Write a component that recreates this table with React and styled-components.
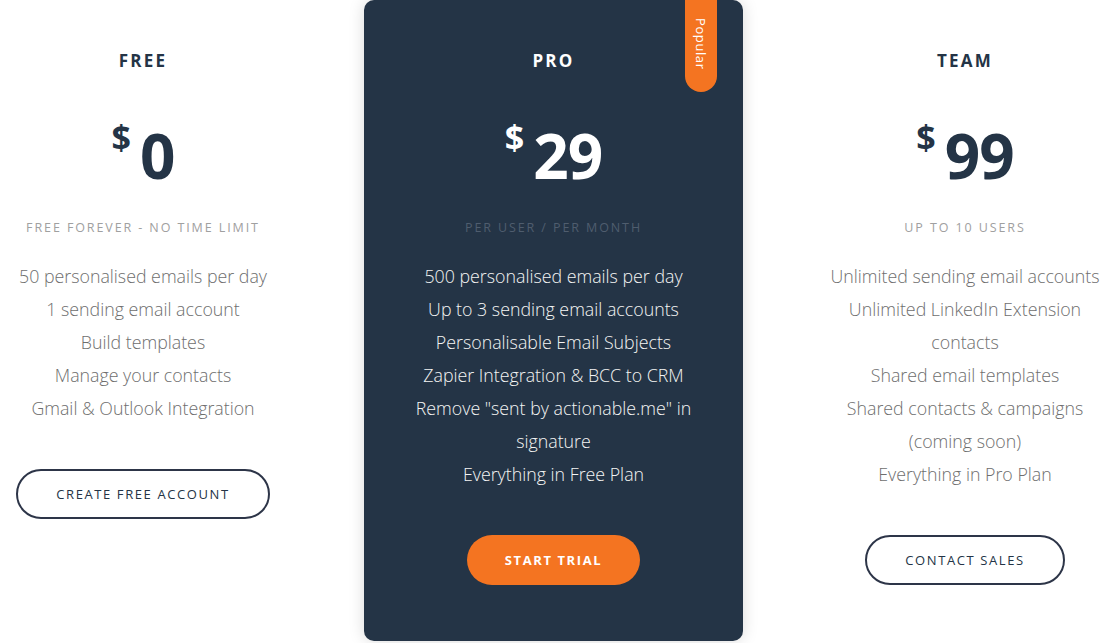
import React from "react";
import styled, { createGlobalStyle } from "styled-components";

const plans = [
	{
		name: "FREE",
		price: "0",
		note: "FREE FOREVER - NO TIME LIMIT",
		features: [
			"50 personalised emails per day",
			"1 sending email account",
			"Build templates",
			"Manage your contacts",
			"Gmail & Outlook Integration",
		],
		cta: "CREATE FREE ACCOUNT",
	},
	{
		name: "PRO",
		price: "29",
		note: "PER USER / PER MONTH",
		features: [
			"500 personalised emails per day",
			"Up to 3 sending email accounts",
			"Personalisable Email Subjects",
			"Zapier Integration & BCC to CRM",
			'Remove "sent by actionable.me" in signature',
			"Everything in Free Plan",
		],
		cta: "START TRIAL",
		featured: true,
	},
	{
		name: "TEAM",
		price: "99",
		note: "UP TO 10 USERS",
		features: [
			"Unlimited sending email accounts",
			"Unlimited LinkedIn Extension contacts",
			"Shared email templates",
			"Shared contacts & campaigns (coming soon)",
			"Everything in Pro Plan",
		],
		cta: "CONTACT SALES",
	},
];

const App = () => {
	return (
		<>
			<GlobalStyle />
			<Pricing>
				{plans.map((plan) => (
					<Plan key={plan.name} $featured={plan.featured}>
						{plan.featured && <Badge>Popular</Badge>}
						<PlanName>{plan.name}</PlanName>
						<Price>
							<Currency>$</Currency>
							<Amount>{plan.price}</Amount>
						</Price>
						<Note $featured={plan.featured}>{plan.note}</Note>
						<Features $featured={plan.featured}>
							{plan.features.map((f) => (
								<li key={f}>{f}</li>
							))}
						</Features>
						<Button $featured={plan.featured}>{plan.cta}</Button>
					</Plan>
				))}
			</Pricing>
		</>
	);
};

const GlobalStyle = createGlobalStyle`
	body {
		margin: 0;
		background: #ffffff;
		font-family: "Open Sans", "Noto Sans", sans-serif;
	}
`;

const Pricing = styled.div`
	display: grid;
	grid-template-columns: 286px 379px 288px;
	column-gap: 78px;
	align-items: start;
	width: 1108px;
	height: 643px;
	overflow: hidden;
`;

const Plan = styled.section`
	position: relative;
	display: flex;
	flex-direction: column;
	align-items: center;
	text-align: center;
	padding: 50px 0 0;
	height: ${(p) => (p.$featured ? "641px" : "auto")};
	box-sizing: border-box;
	background: ${(p) => (p.$featured ? "#243446" : "transparent")};
	color: ${(p) => (p.$featured ? "#ffffff" : "#243446")};
	border-radius: 10px;
	box-shadow: ${(p) => (p.$featured ? "0 0 16px rgba(0, 0, 0, 0.15)" : "none")};
`;

const Badge = styled.div`
	position: absolute;
	top: 0;
	right: 26px;
	width: 32px;
	height: 92px;
	background: #f47421;
	border-radius: 0 0 16px 16px;
	color: #ffffff;
	font-size: 13px;
	letter-spacing: 0.6px;
	writing-mode: vertical-rl;
	display: flex;
	align-items: center;
	justify-content: flex-start;
	padding-top: 18px;
	box-sizing: border-box;
`;

const PlanName = styled.h2`
	margin: 0;
	font-size: 17px;
	font-weight: 700;
	letter-spacing: 2.2px;
	line-height: 22px;
`;

const Price = styled.div`
	display: flex;
	align-items: flex-start;
	gap: 9px;
	margin-top: 46px;
	height: 76px;
`;

const Currency = styled.span`
	font-size: 34px;
	font-weight: 700;
	line-height: 1;
	margin-top: 2px;
`;

const Amount = styled.span`
	font-size: 62px;
	font-weight: 700;
	line-height: 1;
	margin-top: 6px;
	letter-spacing: -1px;
`;

const Note = styled.div`
	margin-top: 25px;
	font-size: 12.5px;
	letter-spacing: 1.9px;
	color: ${(p) => (p.$featured ? "#4f5d6e" : "#a0a0a0")};
	font-weight: 400;
`;

const Features = styled.ul`
	list-style: none;
	margin: 24px 0 0;
	padding: 0;
	font-size: 17.8px;
	line-height: 33px;
	font-weight: 300;
	color: ${(p) => (p.$featured ? "#f4f4f4" : "#6e6e6e")};
	max-width: ${(p) => (p.$featured ? "300px" : "288px")};
`;

const Button = styled.button`
	margin-top: 44px;
	height: 50px;
	padding: 0 38px;
	border-radius: 25px;
	font-family: inherit;
	font-size: 13px;
	letter-spacing: 1.6px;
	font-weight: ${(p) => (p.$featured ? 700 : 400)};
	color: ${(p) => (p.$featured ? "#ffffff" : "#243446")};
	background: ${(p) => (p.$featured ? "#f47421" : "#ffffff")};
	border: ${(p) => (p.$featured ? "none" : "2px solid #2d3548")};
`;

export default App;
